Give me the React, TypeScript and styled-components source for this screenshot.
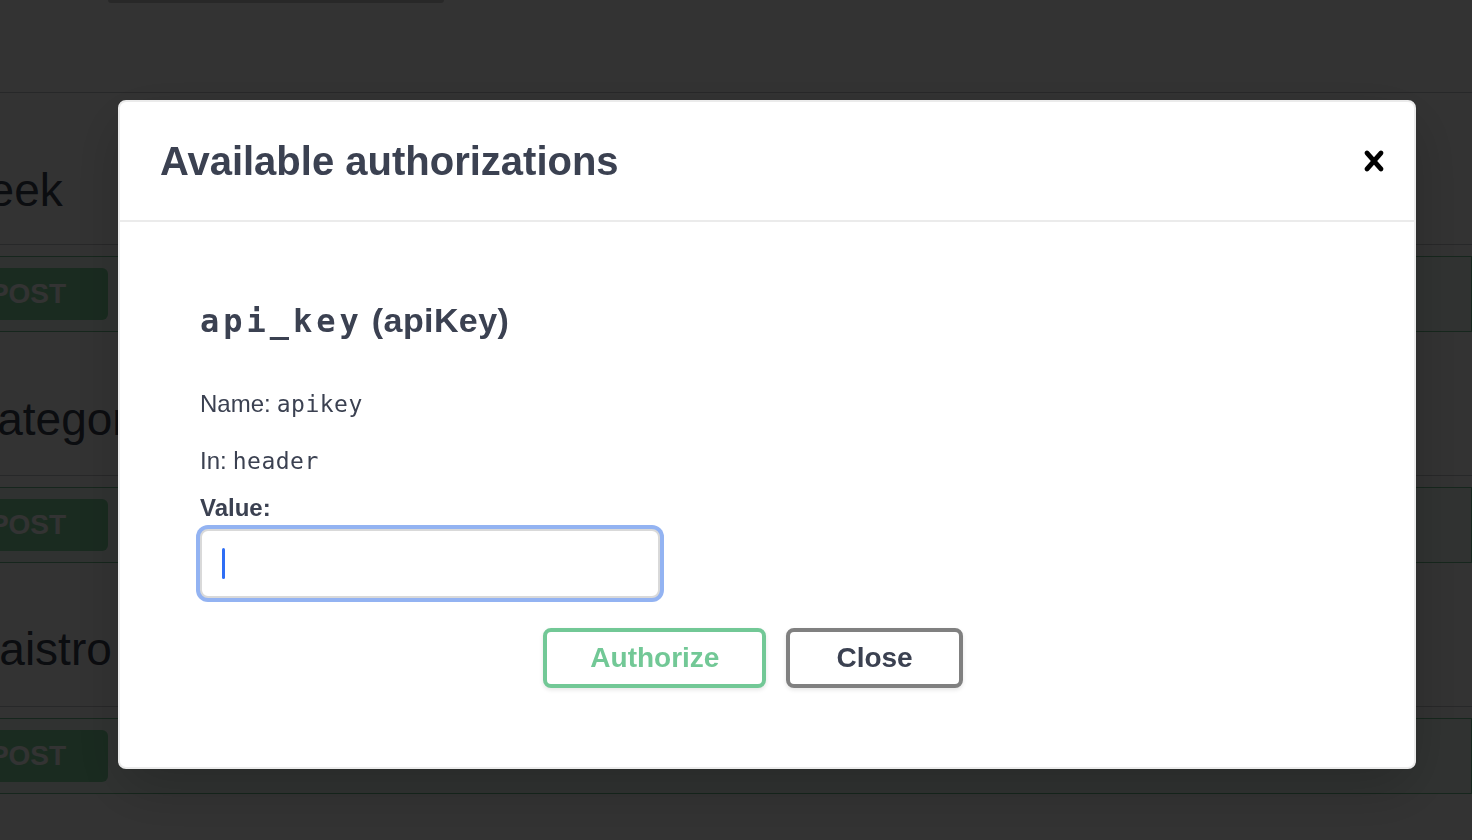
import React from 'react';
import styled, { createGlobalStyle } from 'styled-components';

const GlobalStyle = createGlobalStyle`
  html, body {
    margin: 0;
    padding: 0;
    background: #fff;
    overflow: hidden;
  }
  body {
    font-family: "Liberation Sans", Arial, sans-serif;
    color: #3b4151;
  }
  * {
    box-sizing: border-box;
  }
`;

// ---- page behind the dialog ----

const Page = styled.div`
  width: calc(100% + 63px);
  height: 840px;
  margin-left: -63px;
  display: flex;
  flex-direction: column;
`;

const TopStrip = styled.div`
  height: 93px;
  padding-left: 171px;
  border-bottom: 1px solid rgba(59, 65, 81, 0.3);
`;

const SearchEdge = styled.div`
  width: 336px;
  height: 3px;
  background: #c9c9c9;
  border-radius: 0 0 4px 4px;
`;

const TagRow = styled.div<{ $height: number; $pad: number }>`
  height: ${(p) => p.$height}px;
  padding-top: ${(p) => p.$pad}px;
  border-bottom: 1px solid rgba(59, 65, 81, 0.3);
`;

const TagTitle = styled.span<{ $indent: number }>`
  display: block;
  margin-left: ${(p) => p.$indent}px;
  font-size: 46px;
  line-height: 56px;
  color: #3b4151;
  white-space: nowrap;
`;

const OpBlock = styled.div`
  height: 76px;
  margin-top: 11px;
  padding: 11px 10px 0;
  border: 1px solid #6fbf8f;
  background: rgba(73, 204, 144, 0.08);
`;

const Method = styled.div`
  width: 160px;
  height: 52px;
  border-radius: 6px;
  background: #82d7a0;
  color: #fff;
  font-size: 28px;
  font-weight: 700;
  line-height: 52px;
  text-align: center;
`;

// ---- dialog ----

const Backdrop = styled.div`
  position: fixed;
  inset: 0;
  display: flex;
  align-items: flex-start;
  padding: 100px 0 0 118px;
  background: rgba(0, 0, 0, 0.8);
`;

const Dialog = styled.div`
  width: 1298px;
  background: #fff;
  border: 2px solid #ebebeb;
  border-radius: 8px;
  box-shadow: 0 20px 60px 0 rgba(0, 0, 0, 0.2);
`;

const Header = styled.div`
  height: 120px;
  display: flex;
  align-items: center;
  justify-content: space-between;
  padding-left: 40px;
  border-bottom: 2px solid #ebebeb;
`;

const Title = styled.h3`
  margin: 0;
  font-size: 40px;
  font-weight: 700;
  color: #3b4151;
`;

const CloseIcon = styled.button`
  display: flex;
  align-items: center;
  padding: 0 20px;
  border: none;
  background: none;
  cursor: pointer;
`;

const Content = styled.div`
  padding: 40px;
`;

const AuthContainer = styled.div`
  padding: 20px 40px;
  margin-bottom: 19px;
`;

const SchemeTitle = styled.h4`
  margin: 18px 0 0;
  font-size: 34px;
  line-height: 40px;
  font-weight: 700;
  letter-spacing: 0.4px;
  color: #3b4151;
`;

const SchemeCode = styled.code`
  font-family: "DejaVu Sans Mono", "Liberation Mono", monospace;
  font-size: 32px;
  font-weight: 700;
  letter-spacing: 4px;
  margin-right: 9px;
`;

const Info = styled.p<{ $gap: number }>`
  margin: ${(p) => p.$gap}px 0 0;
  font-size: 24px;
  line-height: 32px;
  color: #3b4151;
`;

const Mono = styled.code`
  font-family: "DejaVu Sans Mono", "Liberation Mono", monospace;
  font-size: 23px;
  letter-spacing: 0.5px;
  margin-left: 6px;
`;

const FieldLabel = styled.label`
  display: block;
  margin-top: 15px;
  font-size: 24px;
  line-height: 32px;
  font-weight: 700;
  color: #3b4151;
`;

const InputWrap = styled.div`
  position: relative;
  width: 460px;
  margin: 5px 0 10px;
`;

const TextInput = styled.input`
  display: block;
  width: 100%;
  height: 69px;
  padding: 16px 20px;
  border: 2px solid #d9d9d9;
  border-radius: 8px;
  background: #fff;
  font-family: "Liberation Sans", Arial, sans-serif;
  font-size: 28px;
  outline: none;
  box-shadow: 0 0 0 4px #93b3f2;
  caret-color: transparent;
`;

const Caret = styled.span`
  position: absolute;
  left: 22px;
  top: 19px;
  width: 3px;
  height: 31px;
  border-radius: 2px;
  background: #2f6ef5;
`;

const ButtonRow = styled.div`
  display: flex;
  justify-content: center;
  padding-top: 20px;
`;

const Button = styled.button<{ $tone: 'green' | 'gray'; $padX: number; $mr: number }>`
  height: 60px;
  margin-right: ${(p) => p.$mr}px;
  padding: 0 ${(p) => p.$padX}px;
  border: 4px solid ${(p) => (p.$tone === 'green' ? '#72c896' : '#808080')};
  border-radius: 8px;
  background: #fff;
  box-shadow: 0 2px 4px rgba(0, 0, 0, 0.1);
  color: ${(p) => (p.$tone === 'green' ? '#72c896' : '#3b4151')};
  font-family: "Liberation Sans", Arial, sans-serif;
  font-size: 28px;
  font-weight: 700;
  line-height: 32px;
  cursor: pointer;
`;

const rows = [
  { name: 'Week', height: 152, pad: 69, indent: 9 },
  { name: 'Categoria', height: 144, pad: 59, indent: 27 },
  { name: 'Maistro', height: 144, pad: 58, indent: 24 },
];

export default function App() {
  return (
    <>
      <GlobalStyle />
      <Page>
        <TopStrip>
          <SearchEdge />
        </TopStrip>
        {rows.map((r) => (
          <React.Fragment key={r.name}>
            <TagRow $height={r.height} $pad={r.pad}>
              <TagTitle $indent={r.indent}>{r.name}</TagTitle>
            </TagRow>
            <OpBlock>
              <Method>POST</Method>
            </OpBlock>
          </React.Fragment>
        ))}
      </Page>

      <Backdrop>
        <Dialog>
          <Header>
            <Title>Available authorizations</Title>
            <CloseIcon aria-label="Close">
              <svg width="40" height="40" viewBox="0 0 20 20">
                <path
                  fill="#000"
                  d="M14.348 14.849c-.469.469-1.229.469-1.697 0L10 11.819l-2.651 3.029c-.469.469-1.229.469-1.697 0-.469-.469-.469-1.229 0-1.697l2.758-3.15-2.759-3.152c-.469-.469-.469-1.228 0-1.697.469-.469 1.228-.469 1.697 0L10 8.183l2.651-3.031c.469-.469 1.228-.469 1.697 0 .469.469.469 1.229 0 1.697l-2.758 3.152 2.758 3.15c.469.469.469 1.229 0 1.698z"
                />
              </svg>
            </CloseIcon>
          </Header>
          <Content>
            <AuthContainer>
              <SchemeTitle>
                <SchemeCode>api_key</SchemeCode>(apiKey)
              </SchemeTitle>
              <Info $gap={47}>
                Name:<Mono>apikey</Mono>
              </Info>
              <Info $gap={25}>
                In:<Mono>header</Mono>
              </Info>
              <FieldLabel htmlFor="api-key-value">Value:</FieldLabel>
              <InputWrap>
                <TextInput id="api-key-value" type="text" readOnly />
                <Caret />
              </InputWrap>
              <ButtonRow>
                <Button $tone="green" $padX={43} $mr={20}>Authorize</Button>
                <Button $tone="gray" $padX={46} $mr={28}>Close</Button>
              </ButtonRow>
            </AuthContainer>
          </Content>
        </Dialog>
      </Backdrop>
    </>
  );
}
